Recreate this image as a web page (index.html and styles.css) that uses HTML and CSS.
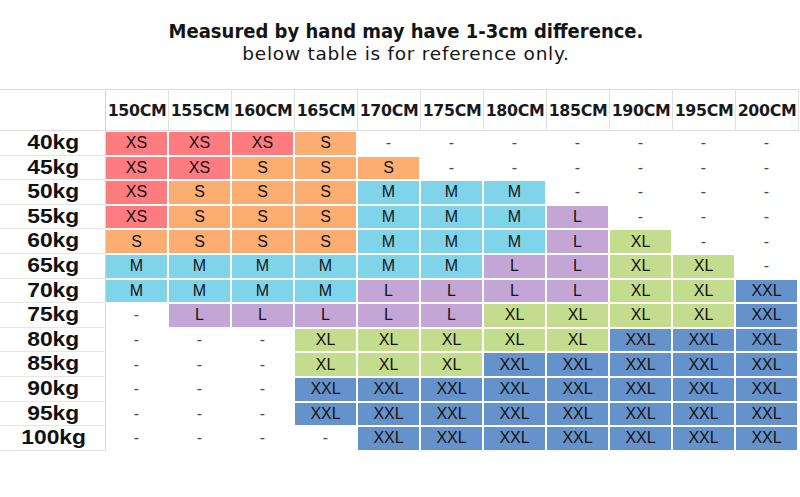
FILE: index.html
```html
<!DOCTYPE html>
<html lang="en">
<head>
<meta charset="utf-8">
<title>Size chart</title>
<link rel="stylesheet" href="styles.css">
</head>
<body>
<div class="page">
  <header class="title">
    <div class="line1">Measured by hand may have 1-3cm difference.</div>
    <div class="line2">below table is for reference only.</div>
  </header>
  <div class="chart">
    <div class="corner"></div>
    <div class="hd">150CM</div><div class="hd">155CM</div><div class="hd">160CM</div><div class="hd">165CM</div><div class="hd">170CM</div><div class="hd">175CM</div><div class="hd">180CM</div><div class="hd">185CM</div><div class="hd">190CM</div><div class="hd">195CM</div><div class="hd">200CM</div>

    <div class="lb"><span>40kg</span></div>
    <div class="c xs">XS</div><div class="c xs">XS</div><div class="c xs">XS</div><div class="c s">S</div><div class="c na">-</div><div class="c na">-</div><div class="c na">-</div><div class="c na">-</div><div class="c na">-</div><div class="c na">-</div><div class="c na">-</div>

    <div class="lb"><span>45kg</span></div>
    <div class="c xs">XS</div><div class="c xs">XS</div><div class="c s">S</div><div class="c s">S</div><div class="c s">S</div><div class="c na">-</div><div class="c na">-</div><div class="c na">-</div><div class="c na">-</div><div class="c na">-</div><div class="c na">-</div>

    <div class="lb"><span>50kg</span></div>
    <div class="c xs">XS</div><div class="c s">S</div><div class="c s">S</div><div class="c s">S</div><div class="c m">M</div><div class="c m">M</div><div class="c m">M</div><div class="c na">-</div><div class="c na">-</div><div class="c na">-</div><div class="c na">-</div>

    <div class="lb"><span>55kg</span></div>
    <div class="c xs">XS</div><div class="c s">S</div><div class="c s">S</div><div class="c s">S</div><div class="c m">M</div><div class="c m">M</div><div class="c m">M</div><div class="c l">L</div><div class="c na">-</div><div class="c na">-</div><div class="c na">-</div>

    <div class="lb"><span>60kg</span></div>
    <div class="c s">S</div><div class="c s">S</div><div class="c s">S</div><div class="c s">S</div><div class="c m">M</div><div class="c m">M</div><div class="c m">M</div><div class="c l">L</div><div class="c xl">XL</div><div class="c na">-</div><div class="c na">-</div>

    <div class="lb"><span>65kg</span></div>
    <div class="c m">M</div><div class="c m">M</div><div class="c m">M</div><div class="c m">M</div><div class="c m">M</div><div class="c m">M</div><div class="c l">L</div><div class="c l">L</div><div class="c xl">XL</div><div class="c xl">XL</div><div class="c na">-</div>

    <div class="lb"><span>70kg</span></div>
    <div class="c m">M</div><div class="c m">M</div><div class="c m">M</div><div class="c m">M</div><div class="c l">L</div><div class="c l">L</div><div class="c l">L</div><div class="c l">L</div><div class="c xl">XL</div><div class="c xl">XL</div><div class="c xxl">XXL</div>

    <div class="lb"><span>75kg</span></div>
    <div class="c na">-</div><div class="c l">L</div><div class="c l">L</div><div class="c l">L</div><div class="c l">L</div><div class="c l">L</div><div class="c xl">XL</div><div class="c xl">XL</div><div class="c xl">XL</div><div class="c xl">XL</div><div class="c xxl">XXL</div>

    <div class="lb"><span>80kg</span></div>
    <div class="c na">-</div><div class="c na">-</div><div class="c na">-</div><div class="c xl">XL</div><div class="c xl">XL</div><div class="c xl">XL</div><div class="c xl">XL</div><div class="c xl">XL</div><div class="c xxl">XXL</div><div class="c xxl">XXL</div><div class="c xxl">XXL</div>

    <div class="lb"><span>85kg</span></div>
    <div class="c na">-</div><div class="c na">-</div><div class="c na">-</div><div class="c xl">XL</div><div class="c xl">XL</div><div class="c xl">XL</div><div class="c xxl">XXL</div><div class="c xxl">XXL</div><div class="c xxl">XXL</div><div class="c xxl">XXL</div><div class="c xxl">XXL</div>

    <div class="lb"><span>90kg</span></div>
    <div class="c na">-</div><div class="c na">-</div><div class="c na">-</div><div class="c xxl">XXL</div><div class="c xxl">XXL</div><div class="c xxl">XXL</div><div class="c xxl">XXL</div><div class="c xxl">XXL</div><div class="c xxl">XXL</div><div class="c xxl">XXL</div><div class="c xxl">XXL</div>

    <div class="lb"><span>95kg</span></div>
    <div class="c na">-</div><div class="c na">-</div><div class="c na">-</div><div class="c xxl">XXL</div><div class="c xxl">XXL</div><div class="c xxl">XXL</div><div class="c xxl">XXL</div><div class="c xxl">XXL</div><div class="c xxl">XXL</div><div class="c xxl">XXL</div><div class="c xxl">XXL</div>

    <div class="lb"><span>100kg</span></div>
    <div class="c na">-</div><div class="c na">-</div><div class="c na">-</div><div class="c na">-</div><div class="c xxl">XXL</div><div class="c xxl">XXL</div><div class="c xxl">XXL</div><div class="c xxl">XXL</div><div class="c xxl">XXL</div><div class="c xxl">XXL</div><div class="c xxl">XXL</div>
  </div>
</div>
</body>
</html>
```

FILE: styles.css
```css
* { box-sizing: border-box; }
html, body { margin: 0; padding: 0; background: #ffffff; }
body { width: 800px; height: 497px; overflow: hidden; font-family: "Liberation Sans", Arial, sans-serif; color: #111; }

.page { display: flex; flex-direction: column; }

.title {
  padding-top: 20px;
  padding-left: 12px;
  text-align: center;
  color: #151515;
}
.line1 {
  font-family: "DejaVu Sans Condensed", "DejaVu Sans", sans-serif;
  font-stretch: condensed;
  font-size: 20px; font-weight: bold; line-height: 22px; height: 22px;
}
.line2 {
  font-family: "DejaVu Sans", sans-serif;
  font-size: 18.5px; font-weight: normal; line-height: 23px; height: 23px;
  letter-spacing: 0.75px;
}

.chart {
  margin-top: 24px;
  width: 799px;
  display: grid;
  grid-template-columns: 106px repeat(11, 63px);
  grid-template-rows: 41px repeat(13, 24.6px);
  border-top: 1px solid #dcdcdc;
}

.corner { border-right: 1px solid #d6d6d6; border-bottom: 1px solid #dcdcdc; }

.hd {
  display: flex; align-items: center; justify-content: center;
  font-family: "DejaVu Sans", sans-serif;
  font-weight: bold;
  font-size: 15.8px;
  letter-spacing: -0.35px;
  color: #1a1a1a;
  border-right: 1px solid #e0e0e0;
  border-bottom: 1px solid #dcdcdc;
}
.hd:last-of-type { border-right: none; }

.lb {
  display: flex; align-items: center; justify-content: center;
  border-right: 1px solid #d6d6d6;
  border-bottom: 1px solid #e6e6e6;
  font-weight: bold;
  font-size: 19.5px;
  color: #111;
  padding-left: 2px;
}
.lb span { display: inline-block; transform: scaleX(1.17); line-height: 1; }

.c {
  display: flex; align-items: center; justify-content: center;
  margin: 1px 2px 1px 0;
  font-size: 16px;
  color: #141414;
}
.na { color: #4a4a4a; }
.xs { background: #fe7b7f; }
.s { background: #fcae72; }
.m { background: #7fd4ea; }
.l { background: #c4a6d6; }
.xl { background: #c4dc8d; }
.xxl { background: #6592cb; }
```
